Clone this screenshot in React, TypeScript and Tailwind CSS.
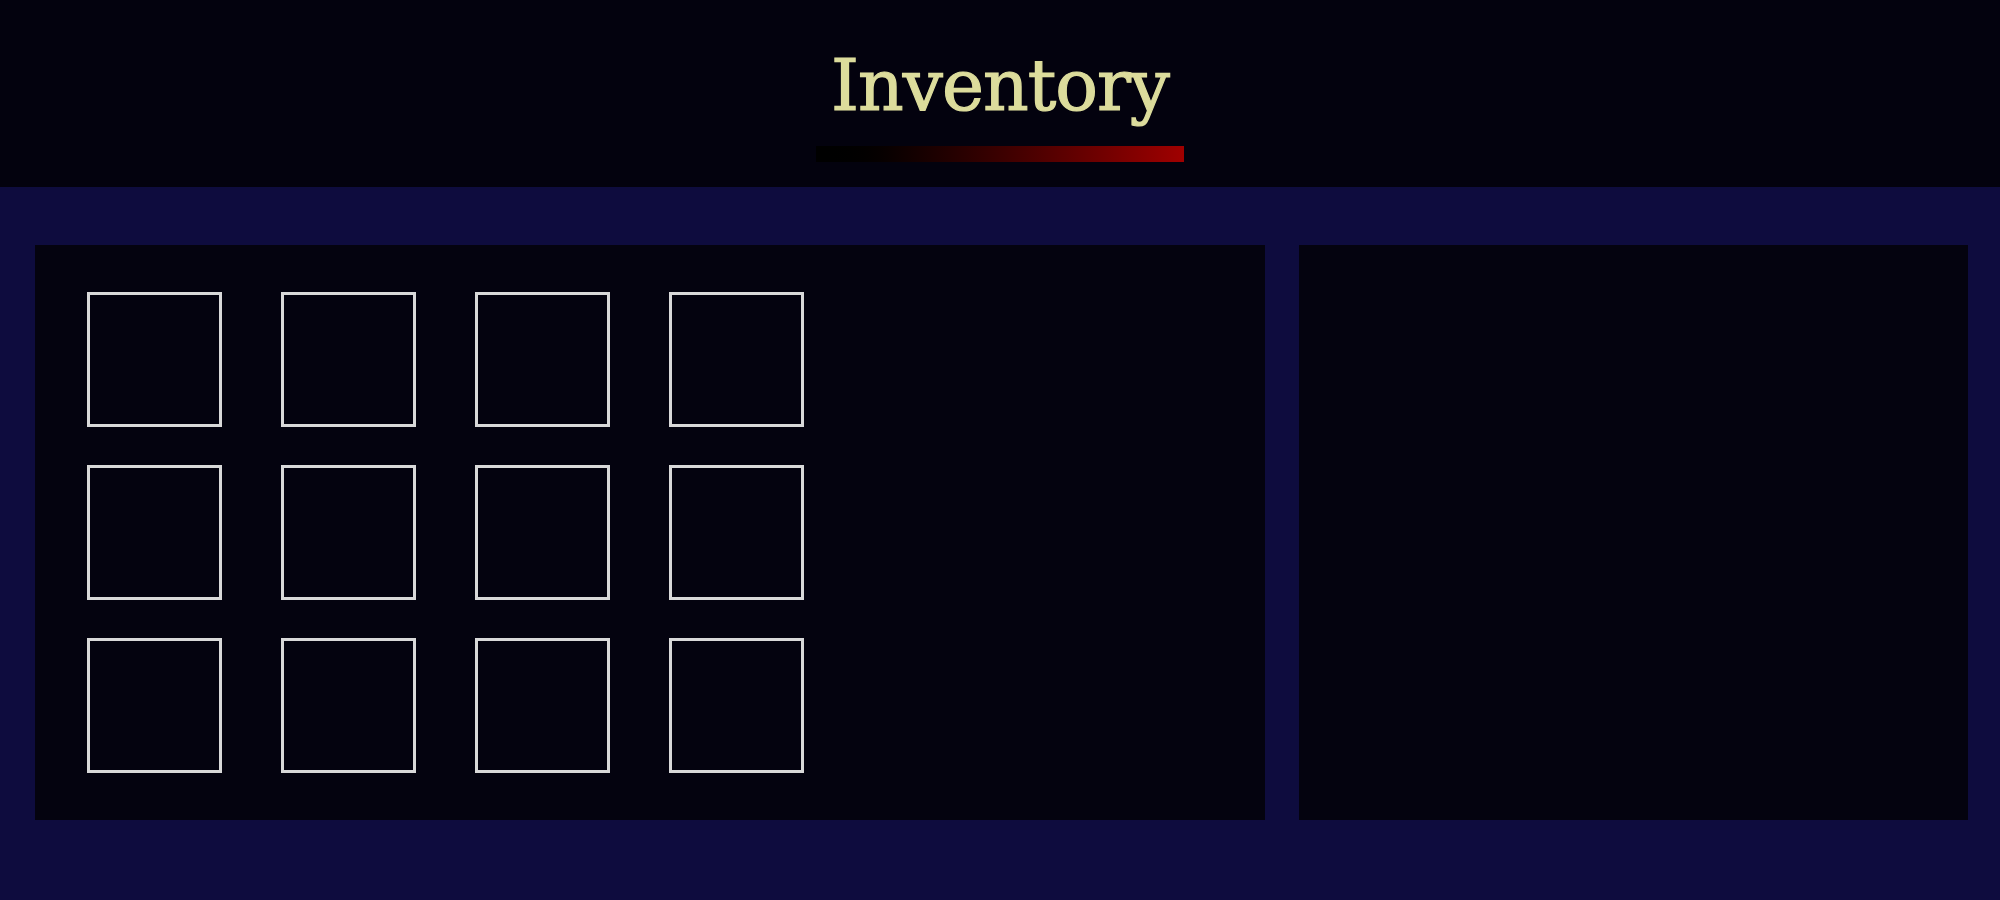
export default function App() {
  const slots = Array.from({ length: 12 });
  return (
    <div className="w-[2000px] h-[900px] flex flex-col bg-[#0e0c3e]">
      <header className="h-[187px] shrink-0 bg-[#03020e] flex flex-col items-center">
        <h1
          className="mt-[50px] text-[71px] leading-none text-[#dcdc9c] tracking-[-1px] [-webkit-text-stroke:1.2px_#dcdc9c]"
          style={{ fontFamily: '"DejaVu Serif", serif' }}
        >
          Inventory
        </h1>
        <div className="mt-[25px] w-[368px] h-[16px] bg-gradient-to-r from-[#000000] to-[#a00000]" />
      </header>
      <main className="flex-1 flex gap-[34px] pt-[58px] pl-[35px] pr-[32px] pb-[80px]">
        <section className="w-[1230px] h-[575px] bg-[#04030f] pl-[52px] pt-[47px]">
          <div className="grid grid-cols-[repeat(4,135px)] gap-x-[59px] gap-y-[38px]">
            {slots.map((_, i) => (
              <div key={i} className="w-[135px] h-[135px] border-[3px] border-[#d9d9d9]" />
            ))}
          </div>
        </section>
        <section className="flex-1 h-[575px] bg-[#04030f]" />
      </main>
    </div>
  );
}
